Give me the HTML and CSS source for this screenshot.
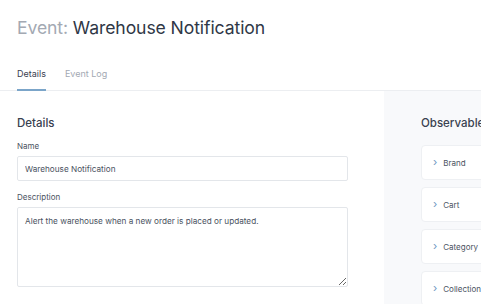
FILE: index.html
```html
<!DOCTYPE html>
<html lang="en">
<head>
    <meta charset="UTF-8">
    <title>Event: Warehouse Notification</title>
    <link rel="stylesheet" href="styles.css">
</head>
<body>

    <div class="page-head">
        <h1><span class="muted">Event:</span> Warehouse Notification</h1>
    </div>

    <div class="tabs">
        <a class="tab active">Details</a>
        <a class="tab">Event Log</a>
    </div>

    <div class="main">
        <div class="content">
            <h2>Details</h2>
            <label class="field-label">Name</label>
            <input class="field" type="text" value="Warehouse Notification">
            <label class="field-label">Description</label>
            <textarea class="field area">Alert the warehouse when a new order is placed or updated.</textarea>
        </div>

        <div class="sidebar">
            <h2>Observable Resources</h2>
            <div class="resource"><span class="chev">&#8250;</span>Brand</div>
            <div class="resource"><span class="chev">&#8250;</span>Cart</div>
            <div class="resource"><span class="chev">&#8250;</span>Category</div>
            <div class="resource"><span class="chev">&#8250;</span>Collection</div>
        </div>
    </div>

</body>
</html>
```

FILE: styles.css
```css
* { box-sizing: border-box; }

body {
    margin: 0;
    font-family: Inter, 'Noto Sans', sans-serif;
    color: #394150;
    background: #fff;
    overflow: hidden;
}

.page-head { padding: 17px 17px 0; height: 56px; }
.page-head h1 {
    margin: 0;
    font-size: 17.6px;
    font-weight: 400;
    color: #2f3746;
    letter-spacing: -0.1px;
}
.muted { color: #a3a9b3; }

.tabs {
    display: flex;
    gap: 19px;
    padding: 0 17px;
    border-bottom: 1px solid #eceef1;
    height: 35px;
}
.tab {
    font-size: 9px;
    color: #a3a9b3;
    padding-top: 12px;
    height: 35px;
}
.tab.active {
    color: #394150;
    border-bottom: 2px solid #7ba5c9;
}

.main { display: flex; height: 213px; }

.content { width: 384px; padding: 25px 36px 0 17px; }
.content h2, .sidebar h2 {
    margin: 0 0 11px;
    font-size: 11.5px;
    font-weight: 500;
    color: #394150;
}
.sidebar h2 { margin-bottom: 15px; }

.field-label {
    display: block;
    font-size: 8px;
    color: #4a5261;
    margin-bottom: 5px;
}
.field {
    display: block;
    width: 331px;
    height: 25px;
    border: 1px solid #e3e6ea;
    border-radius: 2px;
    padding: 0 7px;
    font-family: inherit;
    font-size: 8.2px;
    color: #4a5261;
    margin-bottom: 11px;
    outline: none;
}
.field.area {
    height: 80px;
    padding: 8px 7px;
    resize: vertical;
}

.sidebar {
    flex: 1;
    background: #f8f9fb;
    padding: 25px 0 0 37px;
    white-space: nowrap;
    overflow: hidden;
}
.resource {
    width: 200px;
    height: 35px;
    background: #fff;
    border: 1px solid #eef0f3;
    border-radius: 4px;
    margin-bottom: 7px;
    display: flex;
    align-items: center;
    padding-left: 11px;
    font-size: 8px;
    color: #4a5261;
}
.chev {
    color: #6d99c2;
    font-size: 11px;
    margin-right: 6px;
    line-height: 1;
}
```
